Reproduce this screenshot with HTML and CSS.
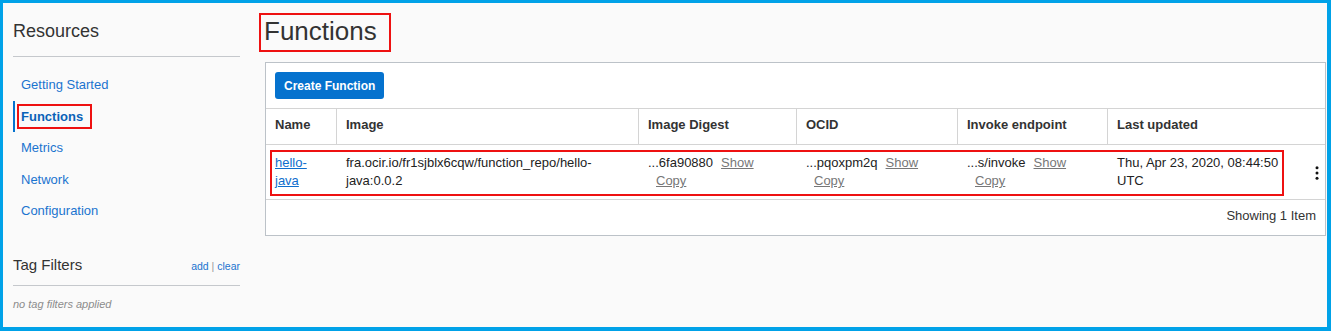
FILE: index.html
```html
<!DOCTYPE html>
<html lang="en">
<head>
    <meta charset="utf-8">
    <meta name="viewport" content="width=device-width, initial-scale=1">
    <title>Functions</title>

    <link rel="stylesheet" href="styles.css">
</head>
<body>
    <div class="frame">
        <aside class="side">
            <h2 class="side-title">Resources</h2>
            <ul class="side-nav">
                <li><a href="#">Getting Started</a></li>
                <li class="active"><a href="#" class="mark">Functions</a></li>
                <li><a href="#">Metrics</a></li>
                <li><a href="#">Network</a></li>
                <li><a href="#">Configuration</a></li>
            </ul>
            <div class="filters-head">
                <h3>Tag Filters</h3>
                <span class="filters-links"><a href="#">add</a> <span class="sep">|</span> <a href="#">clear</a></span>
            </div>
            <p class="filters-empty">no tag filters applied</p>
        </aside>

        <main class="main">
            <h1 class="page-title"><span class="mark">Functions</span></h1>

            <section class="panel">
                <div class="toolbar">
                    <button type="button" class="btn-primary">Create Function</button>
                </div>
                <div class="grid">
                    <table>
                        <colgroup>
                            <col style="width: 71px">
                            <col style="width: 302px">
                            <col style="width: 158px">
                            <col style="width: 161px">
                            <col style="width: 150px">
                            <col style="width: 187px">
                            <col>
                        </colgroup>
                        <thead>
                            <tr>
                                <th>Name</th>
                                <th>Image</th>
                                <th>Image Digest</th>
                                <th>OCID</th>
                                <th>Invoke endpoint</th>
                                <th class="no-sep">Last updated</th>
                                <th class="no-sep"></th>
                            </tr>
                        </thead>
                        <tbody>
                            <tr>
                                <td><a href="#" class="name-link">hello-java</a></td>
                                <td>fra.ocir.io/fr1sjblx6cqw/function_repo/hello-java:0.0.2</td>
                                <td>...6fa90880<a href="#" class="act">Show</a><br><a href="#" class="act">Copy</a></td>
                                <td>...pqoxpm2q<a href="#" class="act">Show</a><br><a href="#" class="act">Copy</a></td>
                                <td>...s/invoke<a href="#" class="act">Show</a><br><a href="#" class="act">Copy</a></td>
                                <td>Thu, Apr 23, 2020, 08:44:50 UTC</td>
                                <td class="kebab">
                                    <svg width="4" height="14" viewBox="0 0 4 14">
                                        <circle cx="2" cy="1.7" r="1.5" fill="#111"/>
                                        <circle cx="2" cy="7" r="1.5" fill="#111"/>
                                        <circle cx="2" cy="12.3" r="1.5" fill="#111"/>
                                    </svg>
                                </td>
                            </tr>
                        </tbody>
                    </table>
                    <div class="row-mark"></div>
                </div>
                <div class="grid-foot">Showing 1 Item</div>
            </section>
        </main>
    </div>
</body>
</html>
```

FILE: styles.css
```css
body
{
    margin: 0;
    font-family: "Liberation Sans", Arial, sans-serif;
    color: #333;
}
a
{
    text-decoration: none;
}
.frame
{
    box-sizing: border-box;
    height: 331px;
    border: solid #00a2e8;
    border-width: 3px 4px 4px 3px;
    background-color: #fafafa;
    display: flex;
}

/* sidebar */
.side
{
    flex: none;
    width: 227px;
    margin-left: 10px;
    padding-top: 18px;
}
.side-title
{
    margin: 0;
    font-size: 18px;
    line-height: 20px;
    font-weight: normal;
    color: #333;
    padding-bottom: 15px;
    border-bottom: 1px solid #c5c8cc;
}
.side-nav
{
    list-style: none;
    margin: 12px 0 0;
    padding: 0;
}
.side-nav li
{
    height: 31.5px;
    display: flex;
    align-items: center;
    padding-left: 8px;
    font-size: 13px;
}
.side-nav a
{
    color: #1a74cf;
}
.side-nav li.active
{
    padding-left: 6px;
    border-left: 2px solid #0572ce;
}
.side-nav li.active a
{
    font-weight: bold;
    color: #0a63b8;
    margin-left: -4px;
    padding: 1px 7px 1px 2px;
    line-height: 19px;
}
.mark
{
    display: inline-block;
    border: 2px solid #ee1111;
}
.filters-head
{
    margin-top: 29px;
    display: flex;
    justify-content: space-between;
    align-items: baseline;
    padding-bottom: 11px;
    border-bottom: 1px solid #c5c8cc;
}
.filters-head h3
{
    margin: 0;
    font-size: 15px;
    line-height: 18px;
    font-weight: normal;
    color: #333;
}
.filters-links
{
    font-size: 10.5px;
    color: #999;
}
.filters-links a
{
    color: #1a74cf;
}
.filters-empty
{
    margin: 11px 0 0;
    font-size: 11px;
    line-height: 14px;
    font-style: italic;
    color: #8c8c8c;
}

/* main */
.main
{
    flex: 1;
    margin-left: 25px;
    margin-right: 1px;
    padding-top: 10px;
}
.page-title
{
    display: flex;
    margin: 0 0 10px;
    font-size: 26px;
    line-height: 30px;
    font-weight: normal;
    color: #333;
}
.page-title .mark
{
    margin-left: -6px;
    padding: 1px 12px 4px 3px;
}
.panel
{
    background-color: #fff;
    border: 1px solid #bcc2c8;
}
.toolbar
{
    padding: 9px;
    display: flex;
}
.btn-primary
{
    height: 27px;
    padding: 0 9px;
    border: none;
    border-radius: 3px;
    background-color: #0572ce;
    color: #fff;
    font-family: inherit;
    font-size: 12px;
    font-weight: bold;
}
.grid
{
    position: relative;
}
table
{
    width: 100%;
    table-layout: fixed;
    border-collapse: separate;
    border-spacing: 0;
    font-size: 13px;
    line-height: 18px;
}
th
{
    text-align: left;
    font-weight: bold;
    color: #333;
    padding: 7px 9px 10px;
    border-top: 1px solid #d4d4d4;
    border-bottom: 1px solid #d4d4d4;
    border-right: 1px solid #d4d4d4;
    white-space: nowrap;
}
th.no-sep
{
    border-right: none;
}
td
{
    padding: 9px;
    vertical-align: top;
    color: #222;
    border-bottom: 1px solid #d4d4d4;
}
.name-link
{
    color: #0f6ecd;
    text-decoration: underline;
}
.act
{
    margin-left: 8px;
    color: #777;
    text-decoration: underline;
}
td.kebab
{
    vertical-align: middle;
    text-align: right;
    padding: 0 6px 0 0;
}
.kebab svg
{
    display: inline-block;
    vertical-align: middle;
}
.row-mark
{
    position: absolute;
    top: 42px;
    left: 4px;
    width: 1014px;
    height: 46px;
    box-sizing: border-box;
    border: 2px solid #ee1111;
    pointer-events: none;
}
.grid-foot
{
    text-align: right;
    font-size: 13px;
    line-height: 18px;
    color: #333;
    padding: 7px 9px 10px;
}
```
